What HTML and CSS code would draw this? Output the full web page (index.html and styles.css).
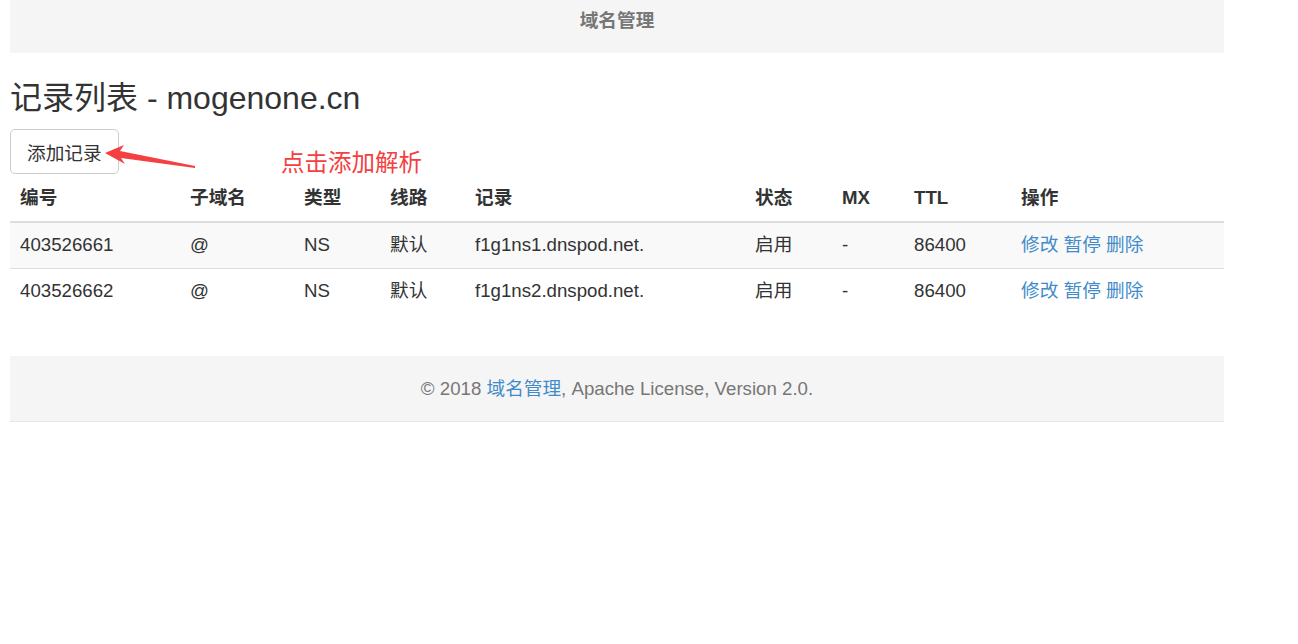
FILE: index.html
```html
<!DOCTYPE html>
<html lang="zh-CN">
<head>
  <meta charset="UTF-8">
  <meta name="viewport" content="width=device-width, initial-scale=1.0">
  <title>域名管理</title>
  <link rel="stylesheet" href="styles.css">
</head>
<body>
  <div class="page">
    <div class="topbar">域名管理</div>

    <h1 class="title">记录列表 - mogenone.cn</h1>

    <div class="toolbar">
      <button class="btn">添加记录</button>
      <svg class="arrow" width="200" height="45" viewBox="0 0 200 45">
        <polygon points="95,24 114,16 110,22 185,37 185,39 111,29 115,35" fill="#f44040"/>
      </svg>
      <span class="note">点击添加解析</span>
    </div>

    <table class="records">
      <thead>
        <tr>
          <th class="c-id">编号</th>
          <th class="c-sub">子域名</th>
          <th class="c-type">类型</th>
          <th class="c-line">线路</th>
          <th class="c-val">记录</th>
          <th class="c-state">状态</th>
          <th class="c-mx">MX</th>
          <th class="c-ttl">TTL</th>
          <th>操作</th>
        </tr>
      </thead>
      <tbody>
        <tr>
          <td>403526661</td>
          <td>@</td>
          <td>NS</td>
          <td>默认</td>
          <td>f1g1ns1.dnspod.net.</td>
          <td>启用</td>
          <td>-</td>
          <td>86400</td>
          <td><a href="#">修改</a> <a href="#">暂停</a> <a href="#">删除</a></td>
        </tr>
        <tr>
          <td>403526662</td>
          <td>@</td>
          <td>NS</td>
          <td>默认</td>
          <td>f1g1ns2.dnspod.net.</td>
          <td>启用</td>
          <td>-</td>
          <td>86400</td>
          <td><a href="#">修改</a> <a href="#">暂停</a> <a href="#">删除</a></td>
        </tr>
      </tbody>
    </table>

    <footer class="footer">
      © 2018 <a href="#">域名管理</a>, Apache License, Version 2.0.
    </footer>
  </div>
</body>
</html>
```

FILE: styles.css
```css
/* strona rekordów */
body {
  margin: 0;
  font-family: "Liberation Sans", Arial, "Noto Sans CJK SC", sans-serif;
  font-size: 18.67px;
  color: #333;
  background: #fff;
}

.page {
  width: 1214px;
  margin-left: 10px;
}

.topbar {
  height: 53px;
  line-height: 41px;
  background: #f5f5f5;
  text-align: center;
  font-size: 18.67px;
  font-weight: bold;
  color: #777;
}

.title {
  margin: 27.67px 0 13.33px;
  font-size: 32px;
  font-weight: normal;
  line-height: 1.1;
  color: #333;
}

.toolbar {
  position: relative;
  height: 45px;
}

.btn {
  height: 45px;
  padding: 0 16px;
  font-family: inherit;
  font-size: 18.67px;
  color: #333;
  background: #fff;
  border: 1px solid #ccc;
  border-radius: 5px;
}

.arrow {
  position: absolute;
  left: 0;
  top: 0;
}

.note {
  position: absolute;
  left: 271px;
  top: 19px;
  line-height: 30px;
  font-size: 23.5px;
  color: #f44040;
  font-family: "DejaVu Serif", "Noto Sans CJK SC", serif;
}

.records {
  width: 100%;
  border-collapse: collapse;
  border-spacing: 0;
}

.records th,
.records td {
  padding: 10px;
  line-height: 26px;
  text-align: left;
  vertical-align: top;
}

.records th {
  padding-top: 11px;
  padding-bottom: 10px;
  font-weight: bold;
  border-bottom: 2px solid #ddd;
}

.records td {
  padding-top: 9px;
  border-top: 1px solid #ddd;
}

.records tbody tr:first-child td {
  border-top: 0;
}

.records tbody tr:nth-child(odd) {
  background: #f9f9f9;
}

.c-id { width: 150px; }
.c-sub { width: 94px; }
.c-type { width: 66px; }
.c-line { width: 65px; }
.c-val { width: 260px; }
.c-state { width: 67px; }
.c-mx { width: 52px; }
.c-ttl { width: 87px; }

.records a {
  color: #428bca;
  text-decoration: none;
}

.footer {
  margin-top: 42px;
  height: 65px;
  line-height: 65px;
  background: #f5f5f5;
  border-bottom: 1px solid #e5e5e5;
  text-align: center;
  color: #777;
}

.footer a {
  color: #428bca;
  text-decoration: none;
}
```
